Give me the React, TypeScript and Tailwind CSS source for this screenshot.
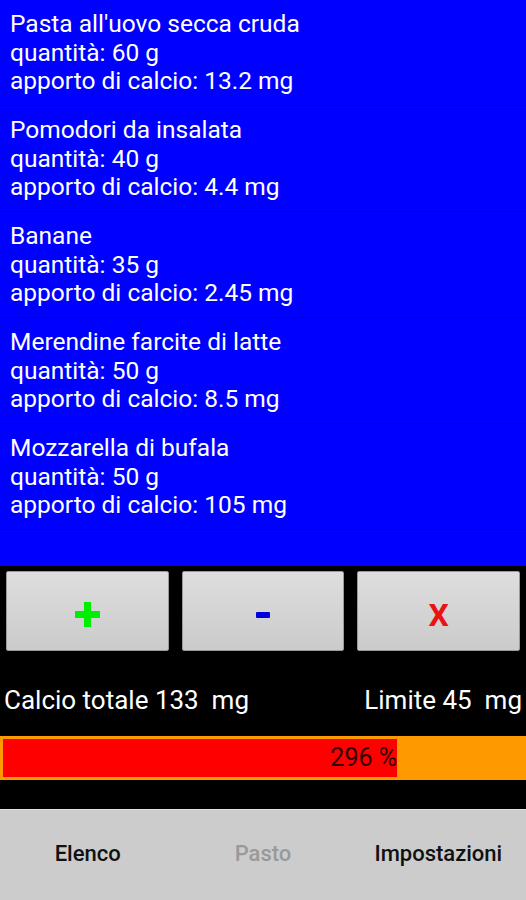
import React from "react";

const items = [
  { name: "Pasta all'uovo secca cruda", qty: "60 g", ca: "13.2 mg" },
  { name: "Pomodori da insalata", qty: "40 g", ca: "4.4 mg" },
  { name: "Banane", qty: "35 g", ca: "2.45 mg" },
  { name: "Merendine farcite di latte", qty: "50 g", ca: "8.5 mg" },
  { name: "Mozzarella di bufala", qty: "50 g", ca: "105 mg" },
];

const Btn = ({ children }: { children: React.ReactNode }) => (
  <div className="flex-1 h-[80px] rounded-[2px] bg-gradient-to-b from-[#dedede] to-[#cbcbcb] border border-[#9a9a9a] flex items-center justify-center pt-[7px]">
    {children}
  </div>
);

export default function App() {
  return (
    <div className="w-[526px] h-[900px] bg-black flex flex-col font-['Roboto',sans-serif] overflow-hidden">
      <div className="bg-[#0000fe] h-[566px] flex flex-col">
        {items.map((it, i) => (
          <div key={i} className="h-[106px] border-b border-[#0000c8] px-[10px] pt-[10px] text-white text-[24.5px] leading-[28.5px] whitespace-nowrap">
            <div>{it.name}</div>
            <div>quantità: {it.qty}</div>
            <div>apporto di calcio: {it.ca}</div>
          </div>
        ))}
      </div>
      <div className="flex gap-[13px] px-[6px] pt-[5px]">
        <Btn>
          <span className="relative w-[25px] h-[25px] block">
            <span className="absolute left-0 right-0 top-[9px] h-[7px] bg-[#00ee00]" />
            <span className="absolute top-0 bottom-0 left-[9px] w-[7px] bg-[#00ee00]" />
          </span>
        </Btn>
        <Btn>
          <span className="block w-[14px] h-[6px] bg-[#0000dd] rounded-[1px]" />
        </Btn>
        <Btn>
          <span className="text-[32px] font-bold leading-none text-[#ee1111]">X</span>
        </Btn>
      </div>
      <div className="flex justify-between items-center text-white text-[26px] px-[4px] mt-[33px] h-[32px] whitespace-nowrap">
        <span>Calcio totale 133&nbsp; mg</span>
        <span>Limite 45&nbsp; mg</span>
      </div>
      <div className="mt-[20px] h-[44px] bg-[#ff9900] border-[3px] border-[#ff9900] flex">
        <div className="w-[394px] h-full bg-[#ff0000] flex items-center justify-end text-[25px] text-[#330000]">
          296 %
        </div>
      </div>
      <div className="flex-1" />
      <div className="h-[91px] bg-[#cccccc] border-t border-[#e0e0e0] flex items-center pb-[4px] text-[22px] font-medium">
        <div className="flex-1 text-center text-[#111111]">Elenco</div>
        <div className="flex-1 text-center text-[#999999]">Pasto</div>
        <div className="flex-1 text-center text-[#111111]">Impostazioni</div>
      </div>
    </div>
  );
}
